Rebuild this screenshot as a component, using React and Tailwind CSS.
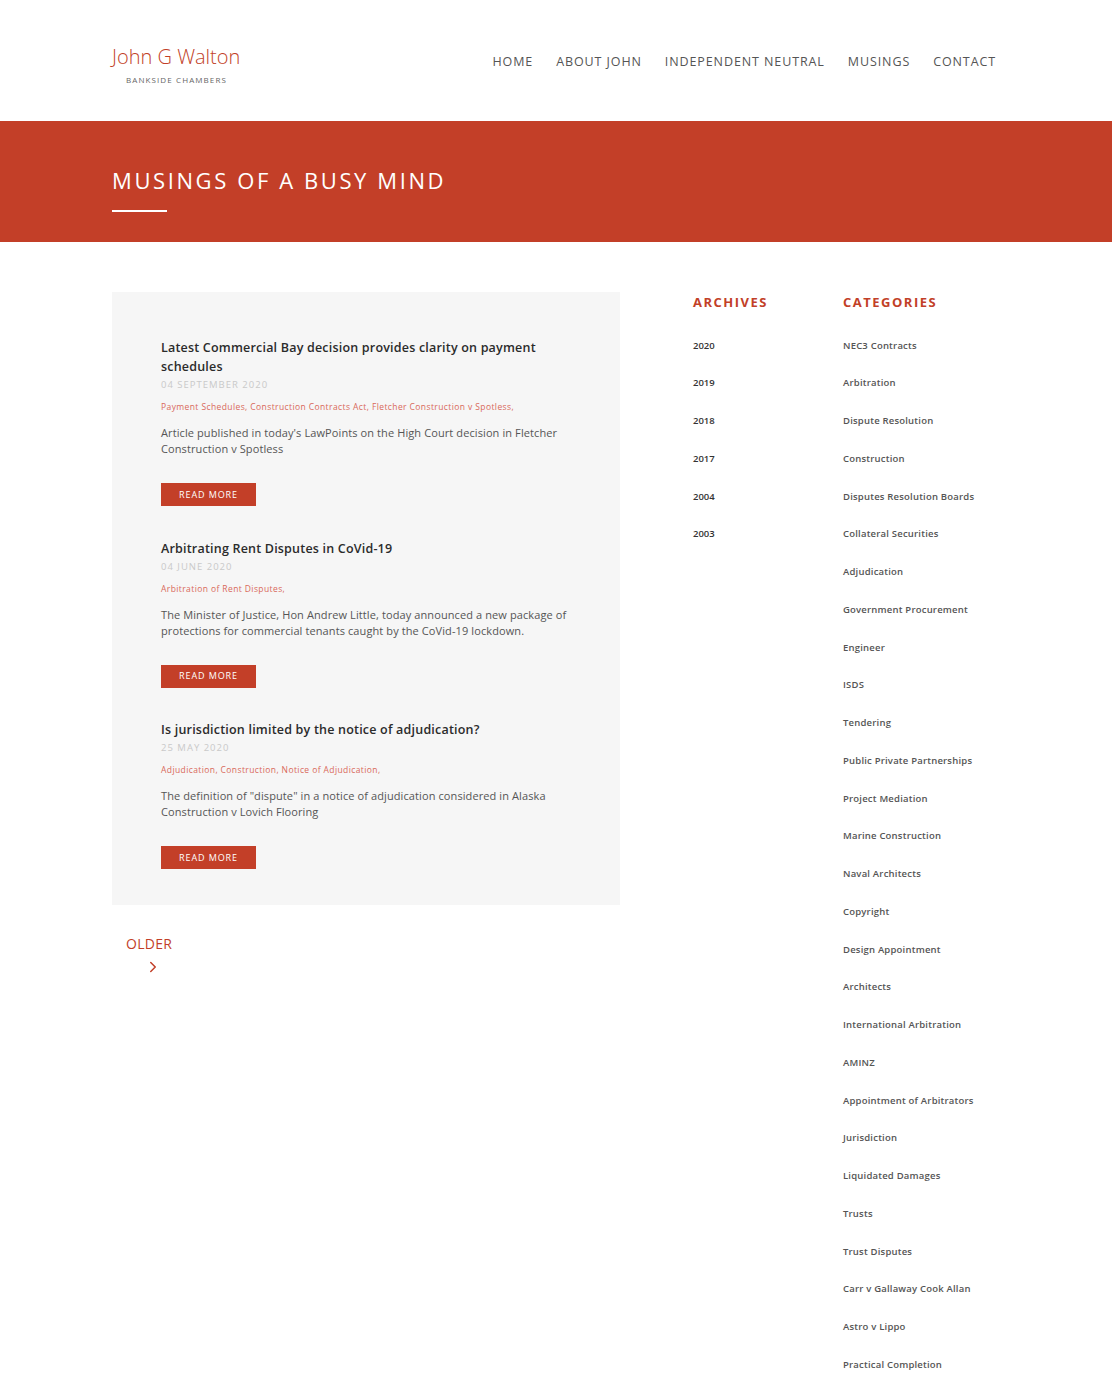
import { ChevronRight } from 'lucide-react';

const navLinks = ['HOME', 'ABOUT JOHN', 'INDEPENDENT NEUTRAL', 'MUSINGS', 'CONTACT'];

const posts = [
  {
    title: 'Latest Commercial Bay decision provides clarity on payment schedules',
    date: '04 SEPTEMBER 2020',
    tags: 'Payment Schedules, Construction Contracts Act, Fletcher Construction v Spotless,',
    excerpt: "Article published in today's LawPoints on the High Court decision in Fletcher Construction v Spotless",
  },
  {
    title: 'Arbitrating Rent Disputes in CoVid-19',
    date: '04 JUNE 2020',
    tags: 'Arbitration of Rent Disputes,',
    excerpt: 'The Minister of Justice, Hon Andrew Little, today announced a new package of protections for commercial tenants caught by the CoVid-19 lockdown.',
  },
  {
    title: 'Is jurisdiction limited by the notice of adjudication?',
    date: '25 MAY 2020',
    tags: 'Adjudication, Construction, Notice of Adjudication,',
    excerpt: 'The definition of "dispute" in a notice of adjudication considered in Alaska Construction v Lovich Flooring',
  },
];

const archives = ['2020', '2019', '2018', '2017', '2004', '2003'];

const categories = [
  'NEC3 Contracts',
  'Arbitration',
  'Dispute Resolution',
  'Construction',
  'Disputes Resolution Boards',
  'Collateral Securities',
  'Adjudication',
  'Government Procurement',
  'Engineer',
  'ISDS',
  'Tendering',
  'Public Private Partnerships',
  'Project Mediation',
  'Marine Construction',
  'Naval Architects',
  'Copyright',
  'Design Appointment',
  'Architects',
  'International Arbitration',
  'AMINZ',
  'Appointment of Arbitrators',
  'Jurisdiction',
  'Liquidated Damages',
  'Trusts',
  'Trust Disputes',
  'Carr v Gallaway Cook Allan',
  'Astro v Lippo',
  'Practical Completion',
];

function PostItem({ post }) {
  return (
    <article className="pb-[32.5px]">
      <h3 className="text-[12.5px] font-semibold leading-[19px] text-[#2b2b2b] tracking-[0.2px]">{post.title}</h3>
      <p className="mt-[2px] text-[9.5px] tracking-[1px] text-[#c9c9c9]">{post.date}</p>
      <p className="mt-[9px] text-[8.5px] tracking-[0.4px] text-[#d9695b]">{post.tags}</p>
      <p className="mt-[11px] text-[11px] leading-[16px] text-[#555] tracking-[0.1px]">{post.excerpt}</p>
      <a href="#" className="mt-[26px] inline-flex h-[23px] w-[95px] items-center justify-center bg-[#c33f28] text-[9px] tracking-[0.9px] text-white">
        READ MORE
      </a>
    </article>
  );
}

export default function App() {
  return (
    <div className="min-h-[1396px] bg-white font-['Open_Sans',sans-serif]">
      <header className="flex h-[121px] items-center justify-between pl-[112px] pr-[116px]">
        <div className="mt-[12px]">
          <p className="text-[20px] font-light leading-none text-[#c23f28]">John G Walton</p>
          <p className="ml-[14px] mt-[7px] text-[8px] tracking-[1.1px] text-[#666]">BANKSIDE CHAMBERS</p>
        </div>
        <nav className="mt-[3px] flex gap-[23px]">
          {navLinks.map((link) => (
            <a key={link} href="#" className="text-[12.5px] tracking-[0.9px] text-[#555]">{link}</a>
          ))}
        </nav>
      </header>

      <section className="h-[121px] bg-[#c33f28] px-[112px] pt-[47px]">
        <h1 className="text-[22px] leading-[24px] tracking-[2.6px] text-white">MUSINGS OF A BUSY MIND</h1>
        <div className="mt-[18px] h-[2px] w-[55px] bg-white" />
      </section>

      <main className="flex gap-[73px] px-[112px] pt-[50px]">
        <div className="w-[508px]">
          <div className="bg-[#f6f6f6] pb-[3px] pl-[49px] pr-[40px] pt-[46px]">
            {posts.map((post) => (
              <PostItem key={post.title} post={post} />
            ))}
          </div>
          <div className="ml-[14px] mt-[28px] inline-flex flex-col items-center">
            <a href="#" className="text-[14px] tracking-[0.3px] text-[#c23f28]">OLDER</a>
            <ChevronRight className="ml-[8px] mt-[4px] h-[18px] w-[18px] text-[#c23f28]" strokeWidth={2} />
          </div>
        </div>

        <aside className="flex pt-[1px]">
          <div className="w-[150px]">
            <h2 className="text-[13px] font-bold tracking-[1.5px] text-[#c23f28]">ARCHIVES</h2>
            <ul className="mt-[14px]">
              {archives.map((year) => (
                <li key={year} className="h-[37.75px] text-[9.5px] font-semibold leading-[37.75px] text-[#333]">{year}</li>
              ))}
            </ul>
          </div>
          <div>
            <h2 className="text-[13px] font-bold tracking-[1.5px] text-[#c23f28]">CATEGORIES</h2>
            <ul className="mt-[14px]">
              {categories.map((category) => (
                <li key={category} className="h-[37.75px] text-[9.5px] font-semibold leading-[37.75px] tracking-[0.2px] text-[#555]">{category}</li>
              ))}
            </ul>
          </div>
        </aside>
      </main>
    </div>
  );
}
